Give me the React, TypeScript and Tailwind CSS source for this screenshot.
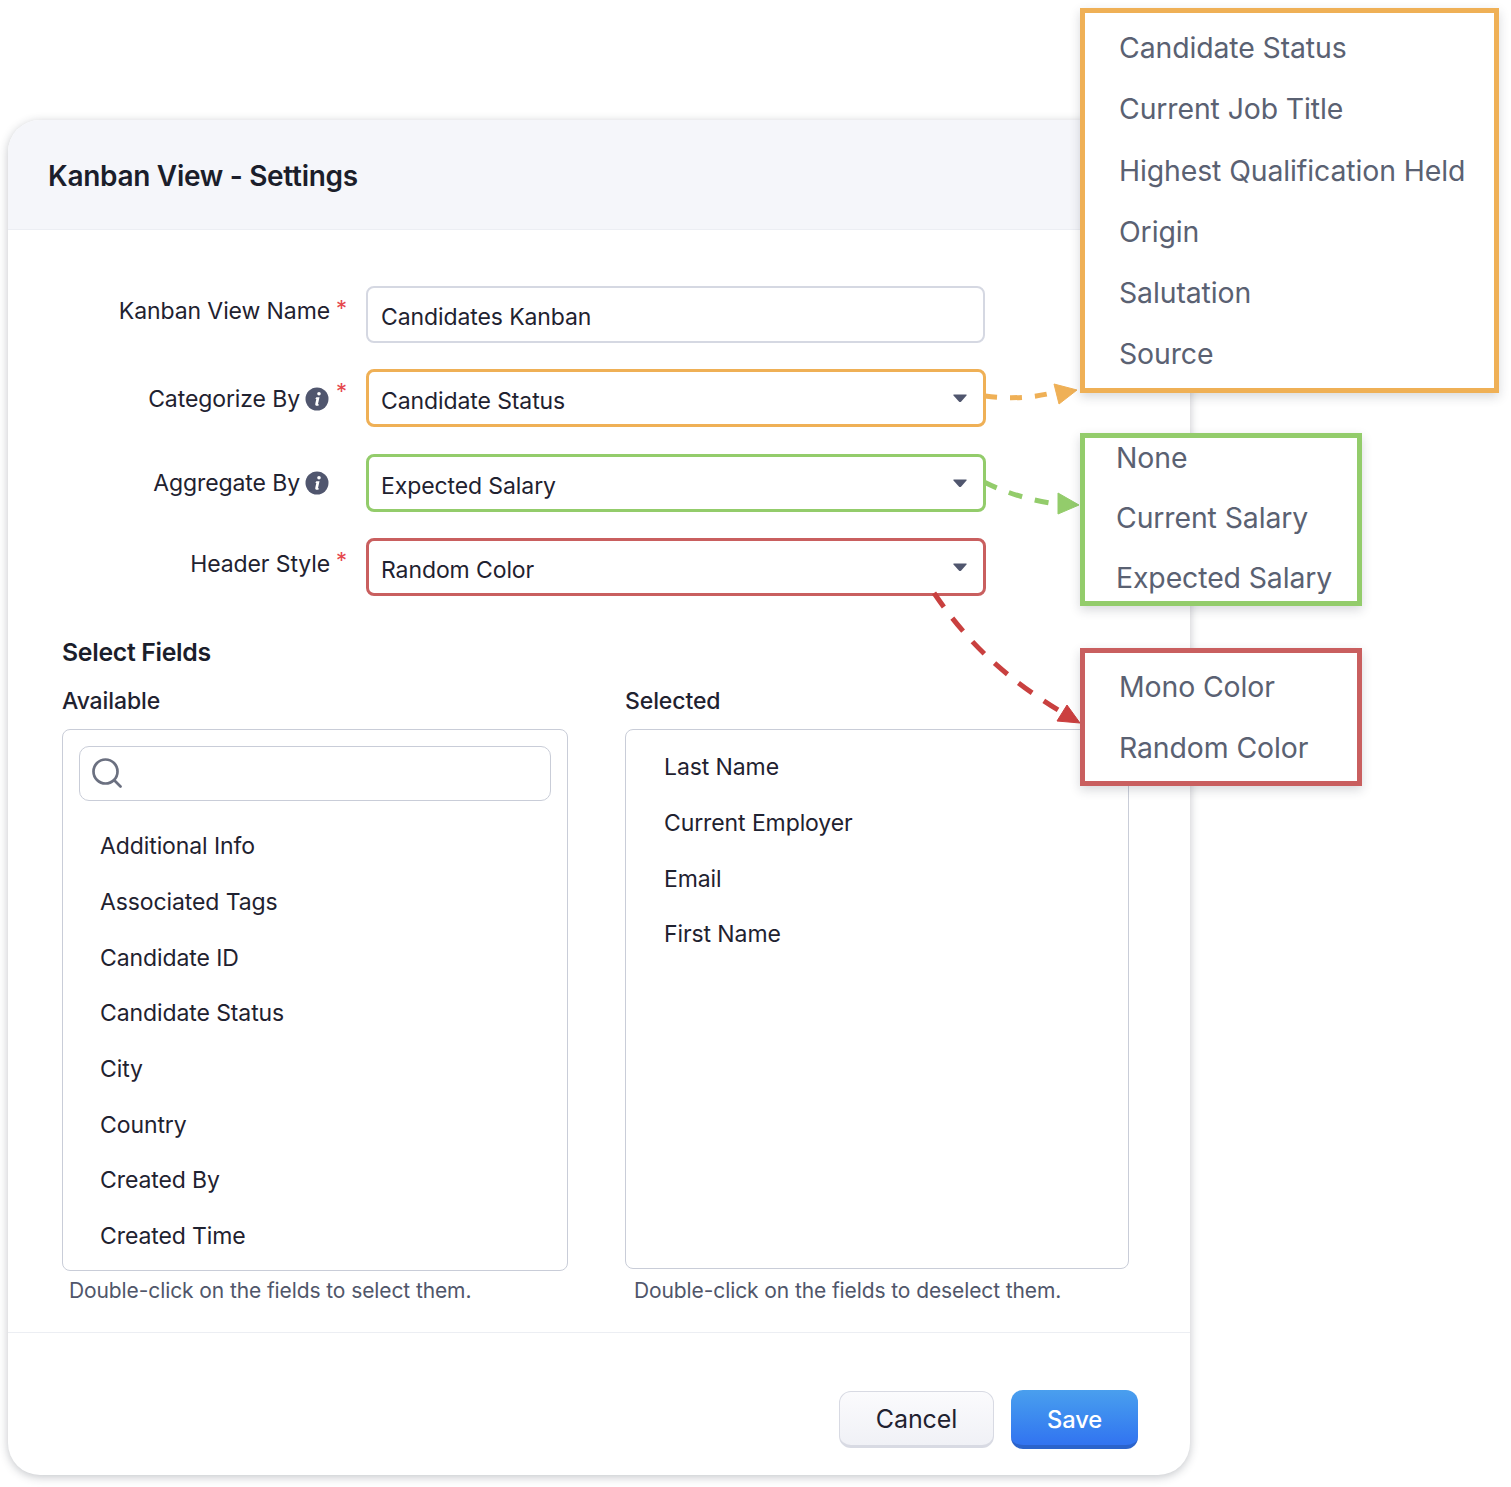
const available = ['Additional Info', 'Associated Tags', 'Candidate ID', 'Candidate Status', 'City', 'Country', 'Created By', 'Created Time']
const selected = ['Last Name', 'Current Employer', 'Email', 'First Name']
const categorize = ['Candidate Status', 'Current Job Title', 'Highest Qualification Held', 'Origin', 'Salutation', 'Source']

function InfoIcon() {
  return (
    <svg viewBox="0 0 24 24" className="h-[24px] w-[24px] shrink-0">
      <circle cx="12" cy="12" r="11.5" fill="#50566e" />
      <path d="M11.300 10.300h3.200l-1.500 6.700c-.1.500.3.600 1.100.2l-.2 1c-2 1-4.100.7-3.600-1.500l1-4.700-1-.3z" fill="#fff" />
      <circle cx="14" cy="6.800" r="1.800" fill="#fff" />
    </svg>
  )
}

function Caret() {
  return (
    <svg viewBox="0 0 14 10" className="h-[10px] w-[14px]">
      <path d="M1 1.500h12c.6 0 .8.6.5 1L8 8.700c-.5.5-1.400.5-1.900 0L.5 2.500c-.3-.4-.1-1 .5-1z" fill="#50566e" />
    </svg>
  )
}

function Select({ value, border }: { value: string; border: string }) {
  return (
    <div className={`flex h-[58px] w-[620px] items-center justify-between rounded-[8px] border-[3px] pl-[12px] pr-[16px] ${border}`}>
      <span className="pt-[6px]">{value}</span>
      <Caret />
    </div>
  )
}

function FieldBox({ items, className, children }: { items: string[]; className: string; children?: React.ReactNode }) {
  return (
    <div className={`rounded-[8px] border border-[#c9cdd8] ${className}`}>
      {children}
      <ul className="flex flex-col">
        {items.map((item) => (
          <li key={item} className="flex h-[55.7px] items-center">{item}</li>
        ))}
      </ul>
    </div>
  )
}

export default function App() {
  return (
    <div className="relative h-[1487px] w-[1511px] overflow-hidden bg-white pl-[8px] pt-[120px] font-['Inter',sans-serif] text-[23px] leading-none tracking-[-0.1px] text-[#1f2230]">
      <div className="flex h-[1355px] w-[1182px] flex-col overflow-hidden rounded-[32px] bg-white shadow-[0_2px_10px_rgba(40,45,60,0.28)]">
        <div className="flex h-[110px] shrink-0 items-center border-b border-[#eceef3] bg-[#f5f6fa] pl-[40px]">
          <h1 className="pt-[2px] text-[28px] font-semibold tracking-[-0.3px] text-[#1b1e2b]">Kanban View - Settings</h1>
        </div>

        <div className="flex flex-col pl-[54px] pt-[56px]">
          <div className="flex flex-col">
            <div className="flex h-[57px] items-start">
              <div className="flex w-[269px] items-start justify-end pt-[14px]">
                <span>Kanban View Name</span>
                <span className="-mr-[15px] -mt-[3px] ml-[6px] w-[10px] text-[22px] leading-[22px] text-[#e5484d]">*</span>
              </div>
              <div className="ml-[35px] flex h-[57px] w-[619px] items-center rounded-[8px] border-2 border-[#d5d8e2] pl-[13px] pt-[6px]">Candidates Kanban</div>
            </div>

            <div className="mt-[26px] flex h-[58px] items-start">
              <div className="flex w-[269px] items-center justify-end gap-[5px] pt-[18px]">
                <span>Categorize By</span>
                <InfoIcon />
                <span className="-mr-[15px] -mt-[16px] ml-[2px] w-[10px] text-[22px] leading-[22px] text-[#e5484d]">*</span>
              </div>
              <div className="ml-[35px]">
                <Select value="Candidate Status" border="border-[#efb056]" />
              </div>
            </div>

            <div className="mt-[27px] flex h-[58px] items-start">
              <div className="flex w-[267px] items-center justify-end gap-[5px] pt-[17px]">
                <span>Aggregate By</span>
                <InfoIcon />
              </div>
              <div className="ml-[37px]">
                <Select value="Expected Salary" border="border-[#93cc6b]" />
              </div>
            </div>

            <div className="mt-[26px] flex h-[58px] items-start">
              <div className="flex w-[269px] items-start justify-end pt-[15px]">
                <span>Header Style</span>
                <span className="-mr-[15px] -mt-[4px] ml-[6px] w-[10px] text-[22px] leading-[22px] text-[#e5484d]">*</span>
              </div>
              <div className="ml-[35px]">
                <Select value="Random Color" border="border-[#c95f5f]" />
              </div>
            </div>
          </div>

          <h2 className="mt-[44px] text-[24.800px] font-semibold tracking-[-0.3px] text-[#1b1e2b]">Select Fields</h2>

          <div className="mt-[25px] flex gap-[57px]">
            <div className="flex w-[506px] flex-col">
              <div className="font-medium">Available</div>
              <div className="mt-[16px] h-[542px] rounded-[8px] border border-[#c9cdd8] px-[16px] pt-[16px]">
                <div className="mb-[18px] flex h-[55px] items-center rounded-[10px] border border-[#c9cdd8] pl-[12px]">
                  <svg viewBox="0 0 30 30" className="h-[30px] w-[30px]" fill="none" stroke="#6b7080" strokeWidth="2.700" strokeLinecap="round">
                    <circle cx="13.500" cy="13.500" r="12" />
                    <path d="M22.500 22.500l6 6" />
                  </svg>
                </div>
                <ul className="flex flex-col pl-[21px]">
                  {available.map((item) => (
                    <li key={item} className="flex h-[55.7px] items-center">{item}</li>
                  ))}
                </ul>
              </div>
              <p className="ml-[7px] mt-[9px] text-[21px] text-[#50566a]">Double-click on the fields to select them.</p>
            </div>
            <div className="flex w-[504px] flex-col">
              <div className="font-medium">Selected</div>
              <FieldBox items={selected} className="mt-[16px] h-[540px] pl-[38px] pt-[10px]" />
              <p className="ml-[9px] mt-[11px] text-[21px] text-[#50566a]">Double-click on the fields to deselect them.</p>
            </div>
          </div>
        </div>

        <div className="mt-[31px] flex flex-1 items-start justify-end gap-[17px] border-t border-[#eceef3] pr-[52px] pt-[57px]">
          <button className="mt-[1px] h-[57px] w-[155px] rounded-[12px] border border-b-[3px] border-[#d8dae3] bg-gradient-to-b from-[#fbfbfd] to-[#f0f1f6] pt-[3px] text-[25px]">Cancel</button>
          <button className="h-[59px] w-[127px] rounded-[12px] border-b-[4px] border-[#2b63cb] bg-gradient-to-b from-[#4a9fee] to-[#3273f0] pt-[5px] text-[23.700px] font-medium text-white">Save</button>
        </div>
      </div>

      <svg className="absolute left-0 top-0 h-[1487px] w-[1511px]" viewBox="0 0 1511 1487" fill="none">
        <path d="M985 396c24 3 46 2 67-3" stroke="#efb056" strokeWidth="5" strokeDasharray="12 13" />
        <path d="M1077 390l-18 14-5-20z" fill="#efb056" stroke="#efb056" strokeLinejoin="round" />
        <path d="M984 482c20 10 42 17 66 21" stroke="#93cc6b" strokeWidth="5" strokeDasharray="14 13" />
        <path d="M1079 505l-21 9v-21z" fill="#93cc6b" stroke="#93cc6b" strokeLinejoin="round" />
        <path d="M934 593c34 50 70 84 129 120" stroke="#c9403f" strokeWidth="5" strokeDasharray="17 14" />
        <path d="M1080 723l-23-2 10-16z" fill="#cb3f3f" stroke="#cb3f3f" strokeLinejoin="round" />
      </svg>

      <ul className="absolute left-[1080px] top-[8px] h-[385px] w-[419px] border-[5px] border-[#efb056] bg-white pl-[34px] pt-[4px] text-[28.400px] leading-[61.300px] text-[#5a6172] shadow-[0_4px_10px_rgba(40,45,60,0.18)]">
        {categorize.map((item) => <li key={item}>{item}</li>)}
      </ul>

      <ul className="absolute left-[1080px] top-[433px] h-[173px] w-[282px] border-[5px] border-[#93cc6b] bg-white pl-[31px] text-[28.400px] leading-[60px] text-[#5a6172] shadow-[0_4px_10px_rgba(40,45,60,0.18)]">
        <li className="-mt-[10px]">None</li>
        <li>Current Salary</li>
        <li>Expected Salary</li>
      </ul>

      <ul className="absolute left-[1080px] top-[648px] h-[138px] w-[282px] border-[5px] border-[#c95f5f] bg-white pl-[34px] pt-[3px] text-[28.400px] leading-[61.300px] text-[#5a6172] shadow-[0_4px_10px_rgba(40,45,60,0.18)]">
        <li>Mono Color</li>
        <li>Random Color</li>
      </ul>
    </div>
  )
}
